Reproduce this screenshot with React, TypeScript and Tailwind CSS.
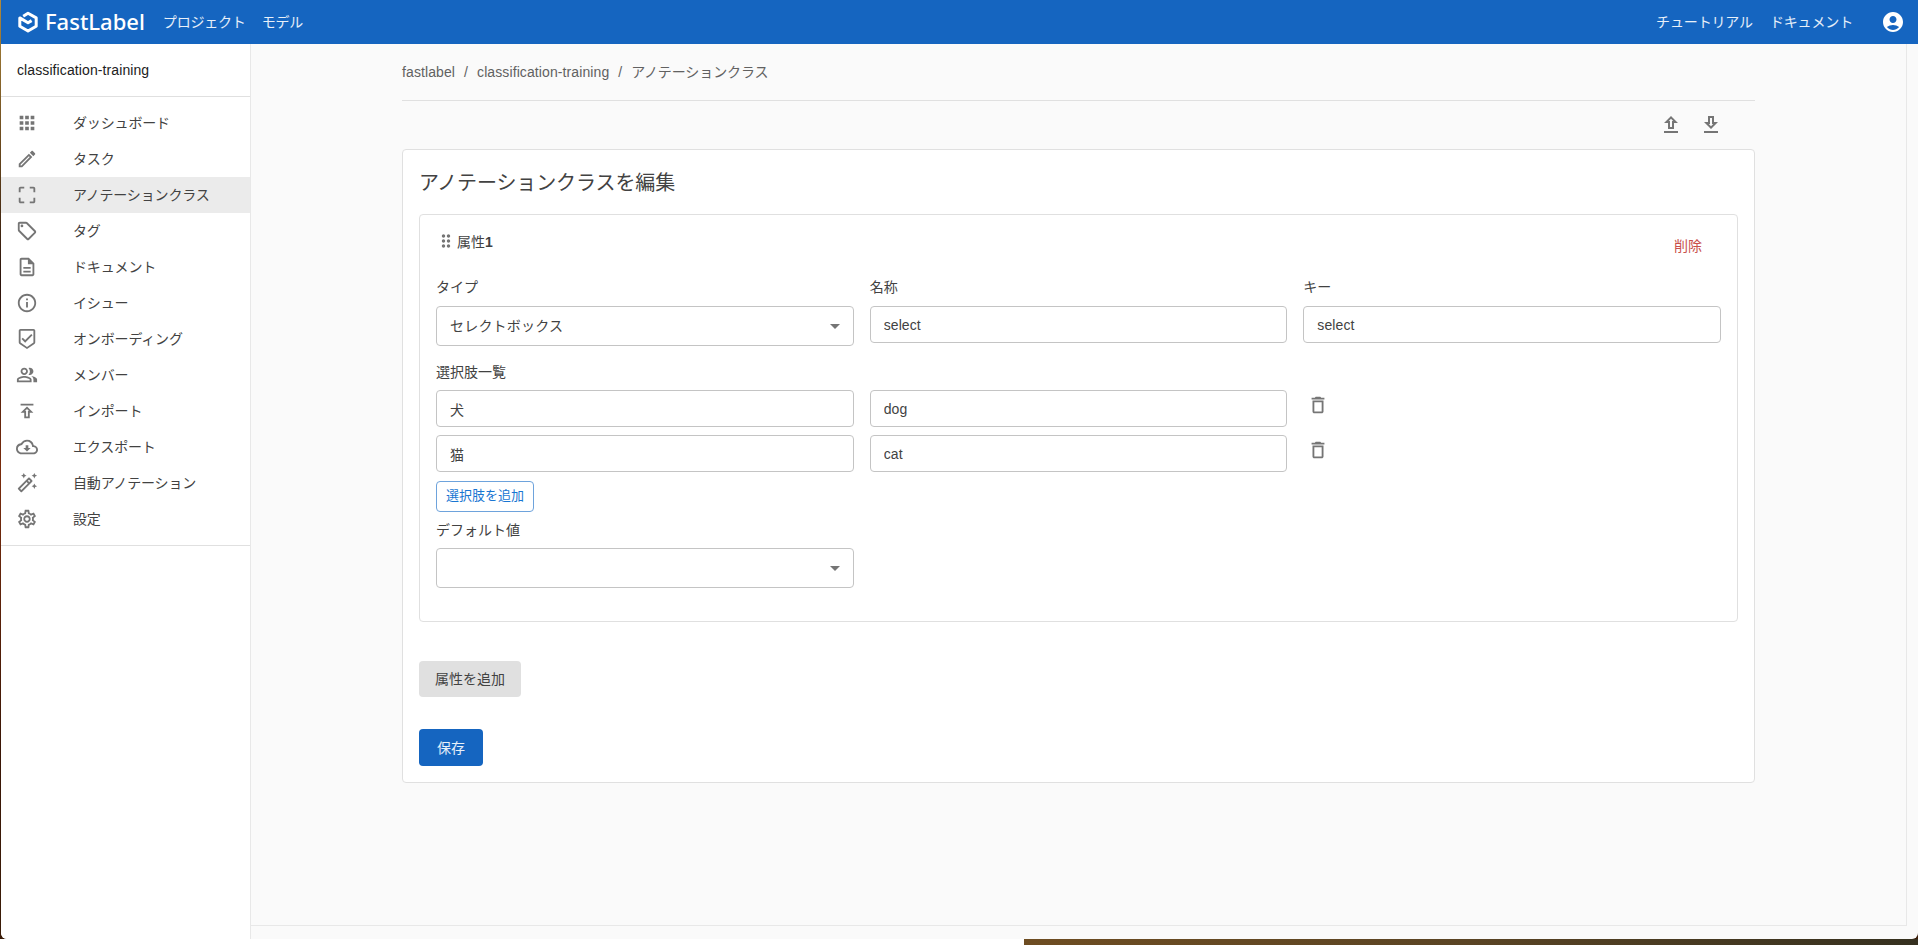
import {
  MdAccountCircle,
  MdApps,
  MdArrowDropDown,
  MdCropFree,
  MdDragIndicator,
  MdInfoOutline,
  MdOutlineAutoFixHigh,
  MdOutlineCloudDownload,
  MdOutlineDelete,
  MdOutlineDescription,
  MdOutlineEdit,
  MdOutlineLocalOffer,
  MdOutlinePeopleAlt,
  MdOutlineSettings,
} from "react-icons/md";

function IconPath({ d, className }: { d: string; className?: string }) {
  return (
    <svg viewBox="0 0 24 24" fill="currentColor" className={className}>
      <path d={d} />
    </svg>
  );
}

const shieldPath =
  "M19 1H5c-1.1 0-1.99.9-1.99 2L3 15.93c0 .69.35 1.3.88 1.66L12 23l8.11-5.41c.53-.36.88-.97.88-1.66L21 3c0-1.1-.9-2-2-2zm-7 19.6l-7-4.66V3h14v12.93l-7 4.67zm-2.01-7.42l-2.58-2.59L6 12l4 4 8-8-1.42-1.42z";
const publishPath = "M5 4v2h14V4H5zm4 16h6v-6h4l-7-7-7 7h4v6zm3-10.17L14.17 12H13v6h-2v-6H9.83L12 9.83z";
const uploadPath = "M9 16h6v-6h4l-7-7-7 7h4v6zm3-10.17L14.17 8H13v6h-2V8H9.83L12 5.83zM5 18h14v2H5z";
const downloadPath = "M19 9h-4V3H9v6H5l7 7 7-7zm-8 2V5h2v6h1.17L12 13.17 9.83 11H11zm-6 7h14v2H5z";

function ShieldIcon({ className }: { className?: string }) {
  return <IconPath d={shieldPath} className={className} />;
}

function PublishIcon({ className }: { className?: string }) {
  return <IconPath d={publishPath} className={className} />;
}

const navItems = [
  { label: "ダッシュボード", icon: MdApps },
  { label: "タスク", icon: MdOutlineEdit },
  { label: "アノテーションクラス", icon: MdCropFree, active: true },
  { label: "タグ", icon: MdOutlineLocalOffer },
  { label: "ドキュメント", icon: MdOutlineDescription },
  { label: "イシュー", icon: MdInfoOutline },
  { label: "オンボーディング", icon: ShieldIcon },
  { label: "メンバー", icon: MdOutlinePeopleAlt },
  { label: "インポート", icon: PublishIcon },
  { label: "エクスポート", icon: MdOutlineCloudDownload },
  { label: "自動アノテーション", icon: MdOutlineAutoFixHigh },
  { label: "設定", icon: MdOutlineSettings },
];

function Logo() {
  return (
    <svg viewBox="0 0 22 24" className="w-[22px] h-6 shrink-0" fill="none">
      <path
        d="M6.2 6.2 11 3.3l8.2 4.6v8.4L11 21 2.8 16.3V7.9l8.2 4.9 3.6-2.2"
        stroke="#fff"
        strokeWidth="3"
        strokeLinejoin="round"
      />
    </svg>
  );
}

function TextField({ value }: { value: string }) {
  return (
    <input
      readOnly
      value={value}
      className="w-full h-[37px] rounded border border-[#c4c4c4] bg-white px-[13px] text-sm tracking-[0.1px] text-[#424242] outline-none"
    />
  );
}

function SelectBox({ value }: { value?: string }) {
  return (
    <div className="flex items-center justify-between w-full h-10 rounded border border-[#c4c4c4] bg-white pl-[13px] pr-[6px] text-sm text-[#424242]">
      <span className="tracking-[0.2px]">{value}</span>
      <MdArrowDropDown className="text-[24px] text-[#757575]" />
    </div>
  );
}

function OptionRow({ label, value }: { label: string; value: string }) {
  return (
    <div className="grid grid-cols-3 gap-4">
      <TextField value={label} />
      <TextField value={value} />
      <div className="pl-1 pt-1">
        <MdOutlineDelete className="text-[22px] text-[#757575]" />
      </div>
    </div>
  );
}

export default function App() {
  return (
    <div className="w-[1918px] h-[945px] overflow-hidden flex flex-col font-['Liberation_Sans','Noto_Sans_CJK_JP',sans-serif] text-sm text-[#424242]">
      <div className="h-[939px] flex pl-px bg-[linear-gradient(to_bottom,#b08a3c_0%,#6b4a1e_15%,#2a120a_30%,#7a2c0c_50%,#3a1606_80%,#3a1c08_100%)]">
        <div className="flex-1 flex flex-col rounded-b-md overflow-hidden bg-[#fafafa]">
          <header className="h-11 shrink-0 flex items-center bg-[#1565c0] text-white/90 pl-4 pr-[13px]">
            <Logo />
            <span className="ml-[6px] font-['Noto_Sans',sans-serif] text-[22px] font-medium text-white">
              FastLabel
            </span>
            <nav className="ml-[18px] flex gap-[16px] tracking-[-0.2px]">
              <span>プロジェクト</span>
              <span>モデル</span>
            </nav>
            <div className="ml-auto flex items-center gap-[17px] tracking-[-0.15px]">
              <span>チュートリアル</span>
              <span>ドキュメント</span>
              <MdAccountCircle className="ml-[11px] text-2xl text-white" />
            </div>
          </header>

          <div className="flex-1 flex min-h-0">
            <aside className="w-[250px] shrink-0 bg-white border-r border-[#e8e8e8]">
              <div className="h-[53px] flex items-center pl-4 border-b border-[#e0e0e0] tracking-[0.1px] text-[#212121]">
                classification-training
              </div>
              <ul className="py-2 border-b border-[#e0e0e0]">
                {navItems.map((item) => (
                  <li
                    key={item.label}
                    className={`h-9 flex items-center pl-[15px] ${item.active ? "bg-[#ebebeb]" : ""}`}
                  >
                    <item.icon className="text-[22px] text-[#757575] w-[22px] h-[22px]" />
                    <span className="ml-[35px] tracking-[-0.15px]">{item.label}</span>
                  </li>
                ))}
              </ul>
            </aside>

            <div className="flex-1 flex flex-col min-w-0 pr-[11px] pb-[13px]">
              <main className="flex-1 border-r border-b border-[#e8e8e8] px-[151px]">
                <div className="h-[57px] flex items-center text-[#616161] border-b border-[#e0e0e0] tracking-[0.1px]">
                  <span>fastlabel</span>
                  <span className="mx-[9px]">/</span>
                  <span>classification-training</span>
                  <span className="mx-[9px]">/</span>
                  <span className="tracking-[-0.1px]">アノテーションクラス</span>
                </div>
                <div className="h-[48px] flex items-center justify-end gap-4 pr-[32px] text-[#757575]">
                  <IconPath d={uploadPath} className="w-6 h-6" />
                  <IconPath d={downloadPath} className="w-6 h-6" />
                </div>

                <section className="bg-white border border-[#e0e0e0] rounded px-4 pb-4 h-[634px]">
                  <h1 className="pt-[19px] text-xl leading-7 tracking-[-0.1px] text-[#424242]">
                    アノテーションクラスを編集
                  </h1>

                  <div className="mt-[17px] h-[408px] border border-[#e0e0e0] rounded px-4">
                    <div className="flex justify-between h-[62px]">
                      <div className="flex items-center h-[52px] font-normal">
                        <MdDragIndicator className="text-[20px] text-[#757575]" />
                        <span className="ml-[1px] mt-[1px] text-[#424242]">
                          属性<b>1</b>
                        </span>
                      </div>
                      <span className="mt-[21px] mr-[19px] text-[#c9504c]">削除</span>
                    </div>

                    <div className="grid grid-cols-3 gap-x-4 items-start">
                      <div>
                        <div className="h-[20px] mb-[9px] leading-5">タイプ</div>
                        <SelectBox value="セレクトボックス" />
                      </div>
                      <div>
                        <div className="h-[20px] mb-[9px] leading-5">名称</div>
                        <TextField value="select" />
                      </div>
                      <div>
                        <div className="h-[20px] mb-[9px] leading-5">キー</div>
                        <TextField value="select" />
                      </div>
                    </div>

                    <div className="mt-4 mb-2 leading-5">選択肢一覧</div>
                    <div className="flex flex-col gap-2">
                      <OptionRow label="犬" value="dog" />
                      <OptionRow label="猫" value="cat" />
                    </div>
                    <button className="mt-[9px] block h-[31px] w-[98px] rounded border border-[#6ea3dc] text-[13px] text-[#1976d2]">
                      選択肢を追加
                    </button>
                    <div className="mt-2 mb-2 leading-5">デフォルト値</div>
                    <div className="w-[calc((100%-32px)/3)]">
                      <SelectBox />
                    </div>
                  </div>

                  <button className="block mt-[39px] h-9 w-[102px] rounded bg-[#e0e0e0] text-[#424242]">
                    属性を追加
                  </button>
                  <button className="block mt-8 h-[37px] w-16 rounded bg-[#1565c0] text-white/90">保存</button>
                </section>
              </main>
            </div>
          </div>
        </div>
      </div>
      <div className="h-[6px] flex bg-white">
        <div className="w-[1024px]" />
        <div className="flex-1 bg-[linear-gradient(to_right,#6e4d22,#5a4424,#35301f)]" />
      </div>
    </div>
  );
}
